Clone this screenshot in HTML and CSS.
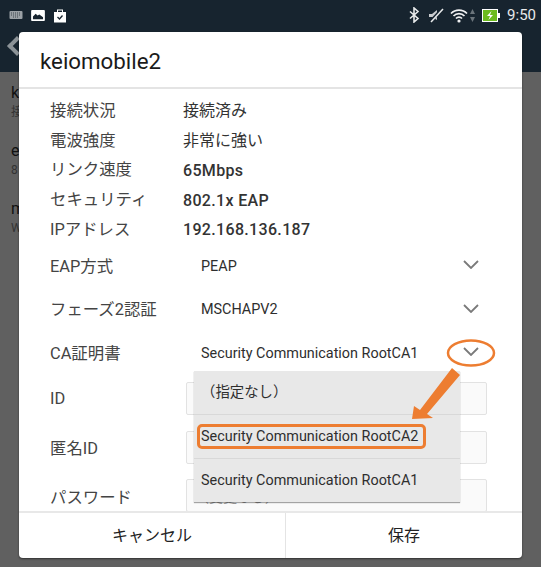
FILE: index.html
```html
<!DOCTYPE html>
<html lang="ja">
<head>
    <meta charset="UTF-8">
    <link rel="stylesheet" href="styles.css">
    <title>keiomobile2</title>
</head>
<body>
<div class="screen">
    <div class="status-bar">
        <div class="status-left">
            <svg class="ico" width="14" height="10" viewBox="0 0 14 10"><rect x="0.5" y="1" width="13" height="8" rx="1" fill="#9aa0a5"/><path d="M2 3h10M2 5h10M4 7h6" stroke="#3c464e" stroke-width="1" stroke-dasharray="1 1"/></svg>
            <svg class="ico" width="14" height="11" viewBox="0 0 15 12"><rect width="15" height="12" rx="1" fill="#fff"/><path d="M2 10V7l3-3 2 2 2-1 4 3v2z" fill="#17242f"/></svg>
            <svg class="ico" width="14" height="15" viewBox="0 0 14 15"><path d="M1 4h3V1.500h6V4h3v10.500H1z" fill="#fff"/><path d="M5 4V2.500h4V4" fill="#17242f"/><path d="M4.500 9l2 2 3-3.500" fill="none" stroke="#17242f" stroke-width="1.300"/></svg>
        </div>
        <div class="status-right">
            <svg width="11" height="16" viewBox="0 0 11 16"><path d="M1 4.500l8 7-4 3.500V1l4 3.500-8 7" fill="none" stroke="#e8eaeb" stroke-width="1.600"/></svg>
            <svg class="mute" width="16" height="15" viewBox="0 0 16 15"><path d="M1 6h3l5-4v10L4 9H1z" fill="#c9cccf"/><path d="M2 14L14 1" stroke="#17242f" stroke-width="3"/><path d="M3 14L15 1" stroke="#e8eaeb" stroke-width="1.500"/></svg>
            <svg class="wifi" width="18" height="15" viewBox="0 0 18 15"><path d="M1 5.500a11 11 0 0 1 16 0M3.500 8a7.500 7.500 0 0 1 11 0M6 10.500a4 4 0 0 1 6 0" fill="none" stroke="#f0f1f2" stroke-width="1.700"/><circle cx="9" cy="13" r="1.600" fill="#f0f1f2"/></svg>
            <svg class="wifi-arrows" width="5" height="15" viewBox="0 0 5 15"><path d="M2.500 1L5 6H0zM2.500 14L0 9h5z" fill="#6b747b"/></svg>
            <svg width="18" height="13" viewBox="0 0 18 13"><rect x="0.500" y="0.500" width="15" height="12" fill="#6dbb1f" stroke="#fff"/><rect x="16" y="4" width="2" height="5" fill="#fff"/><path d="M9.500 2L5 7h3l-1.500 4L11 6H8z" fill="#fff"/></svg>
            <span class="clock">9:50</span>
        </div>
    </div>
    <div class="action-bar"><span class="back-arrow"></span></div>
    <div class="behind">
        <div class="behind-row"><p class="behind-title">k</p><p class="behind-sub">接</p></div>
        <div class="behind-row"><p class="behind-title">e</p><p class="behind-sub">8</p></div>
        <div class="behind-row"><p class="behind-title">m</p><p class="behind-sub">W</p></div>
    </div>

    <div class="dialog">
        <h1 class="dialog-title">keiomobile2</h1>
        <div class="dialog-body">
            <div class="info-list">
                <div class="info-row"><span class="label">接続状況</span><span class="value value-jp">接続済み</span></div>
                <div class="info-row"><span class="label">電波強度</span><span class="value value-jp">非常に強い</span></div>
                <div class="info-row"><span class="label">リンク速度</span><span class="value">65Mbps</span></div>
                <div class="info-row"><span class="label">セキュリティ</span><span class="value">802.1x EAP</span></div>
                <div class="info-row"><span class="label">IPアドレス</span><span class="value">192.168.136.187</span></div>
            </div>
            <div class="select-row"><span class="label">EAP方式</span><span class="select-value">PEAP</span><svg class="chevron" width="16" height="9" viewBox="0 0 16 9"><path d="M1 1l7 7 7-7" fill="none" stroke="#7a7a7a" stroke-width="1.800"/></svg></div>
            <div class="select-row"><span class="label">フェーズ2認証</span><span class="select-value">MSCHAPV2</span><svg class="chevron" width="16" height="9" viewBox="0 0 16 9"><path d="M1 1l7 7 7-7" fill="none" stroke="#7a7a7a" stroke-width="1.800"/></svg></div>
            <div class="select-row"><span class="label">CA証明書</span><span class="select-value">Security Communication RootCA1</span><svg class="chevron" width="16" height="9" viewBox="0 0 16 9"><path d="M1 1l7 7 7-7" fill="none" stroke="#7a7a7a" stroke-width="1.800"/></svg></div>
            <div class="input-list">
                <div class="input-row"><span class="label">ID</span><div class="input-box"></div></div>
                <div class="input-row"><span class="label">匿名ID</span><div class="input-box"></div></div>
                <div class="input-row"><span class="label">パスワード</span><div class="input-box input-last">（変更なし）</div></div>
            </div>
        </div>
        <div class="dialog-footer">
            <div class="footer-btn btn-cancel">キャンセル</div>
            <div class="footer-btn btn-save">保存</div>
        </div>
    </div>

    <div class="dropdown">
        <div class="dropdown-item item-none">（指定なし）</div>
        <div class="dropdown-item">Security Communication RootCA2</div>
        <div class="dropdown-item">Security Communication RootCA1</div>
    </div>

    <!-- orange callouts on top of the screenshot -->
    <div class="mark-box"></div>
    <svg class="mark-overlay" width="541" height="567" viewBox="0 0 541 567">
        <ellipse cx="471" cy="353" rx="23" ry="12.500" fill="none" stroke="#ed7d31" stroke-width="2.500"/>
        <path d="M452 368L460 375L427 414L433 418L412 419L414 406L420 410Z" fill="#ed7d31"/>
    </svg>
</div>
</body>
</html>
```
FILE: styles.css
```css
* {
    margin: 0;
    padding: 0;
    box-sizing: border-box;
}

body {
    font-family: "Roboto", "Noto Sans CJK JP", sans-serif;
    background-color: #606060;
    overflow: hidden;
}

.screen {
    position: relative;
    width: 541px;
    height: 567px;
    overflow: hidden;
}

.status-bar {
    height: 30px;
    background-color: #17242f;
    display: flex;
    justify-content: space-between;
    align-items: center;
    padding: 0 5px 0 9px;
}

.status-left {
    display: flex;
    align-items: center;
    gap: 8px;
}

.status-right {
    display: flex;
    align-items: center;
    gap: 7px;
}

.mute {
    margin-left: 1px;
}

.wifi {
    margin-left: -1px;
}

.wifi-arrows {
    margin-left: -5px;
}

.clock {
    color: #e8eaeb;
    font-size: 15px;
}

.action-bar {
    height: 42px;
    background-color: #17242f;
    padding: 9px 0 0 10px;
}

.back-arrow {
    display: block;
    width: 14px;
    height: 14px;
    border-left: 4px solid #8b9297;
    border-bottom: 4px solid #8b9297;
    transform: rotate(45deg);
}

.behind {
    height: 495px;
    background-color: #606060;
    color: #222;
    padding: 10px 0 0 11px;
}

.behind-row {
    height: 58px;
}

.behind-title {
    font-size: 16px;
    line-height: 21px;
    color: #111;
}

.behind-sub {
    font-size: 12px;
    line-height: 18px;
    color: #333;
}

.dialog {
    position: absolute;
    left: 19px;
    top: 32px;
    width: 503px;
    height: 526px;
    background-color: #fff;
    border-radius: 4px;
    box-shadow: 0 1px 2px rgba(0, 0, 0, 0.5);
    display: flex;
    flex-direction: column;
}

.dialog-title {
    height: 57px;
    border-bottom: 2px solid #e4e4e4;
    font-size: 22.300px;
    font-weight: 400;
    line-height: 55px;
    padding: 2px 0 0 21px;
    color: #1a1a1a;
}

.dialog-body {
    flex: 1;
    overflow: hidden;
    padding-left: 31px;
    color: #3a3a3a;
}

.label {
    font-size: 16.400px;
    color: #444;
    white-space: nowrap;
}

.info-list {
    padding-top: 5px;
}

.info-row {
    display: flex;
    align-items: center;
    height: 29.750px;
}

.info-row .label {
    width: 133px;
}

.value {
    font-size: 16px;
    font-weight: 500;
    letter-spacing: 0.33px;
    padding-top: 4px;
    color: #333;
}

.value-jp {
    font-weight: 400;
    letter-spacing: 0;
    padding-top: 0;
}

.select-row {
    display: flex;
    align-items: center;
    height: 43.500px;
}

.select-row .label {
    width: 151px;
}

.select-value {
    width: 262px;
    font-size: 14.400px;
    padding-top: 3px;
    color: #2e2e2e;
    white-space: nowrap;
}

.input-list {
    padding-top: 1px;
}

.input-row {
    display: flex;
    align-items: center;
    height: 48.500px;
}

.input-row .label {
    width: 136px;
}

.input-box {
    width: 301px;
    height: 33px;
    border: 1px solid #e2e2e2;
    border-radius: 2px;
    background-color: #fafafa;
}

.input-last {
    font-size: 14px;
    line-height: 34px;
    color: #999;
    padding-left: 8px;
    white-space: nowrap;
}

.dialog-footer {
    height: 47px;
    border-top: 2px solid #e8e8e8;
    display: flex;
}

.footer-btn {
    text-align: center;
    font-size: 16px;
    line-height: 45px;
    color: #222;
}

.btn-cancel {
    width: 266px;
}

.btn-save {
    flex: 1;
    border-left: 1px solid #e4e4e4;
}

.dropdown {
    position: absolute;
    left: 194px;
    top: 371px;
    width: 266px;
    height: 131px;
    background-color: #e8e8e8;
    box-shadow: 0 1px 1px rgba(0, 0, 0, 0.35);
    display: flex;
    flex-direction: column;
}

.dropdown-item {
    height: 44px;
    display: flex;
    align-items: center;
    padding: 0 0 1px 7px;
    font-size: 14.400px;
    color: #2e2e2e;
    white-space: nowrap;
}

.dropdown-item + .dropdown-item {
    border-top: 1px solid #d8d8d8;
}

.item-none {
    height: 43px;
    padding-bottom: 4px;
}

.mark-box {
    position: absolute;
    left: 197px;
    top: 424px;
    width: 229px;
    height: 25px;
    border: 3px solid #ed7d31;
    border-radius: 5px;
}

.mark-overlay {
    position: absolute;
    left: 0;
    top: 0;
}
```
